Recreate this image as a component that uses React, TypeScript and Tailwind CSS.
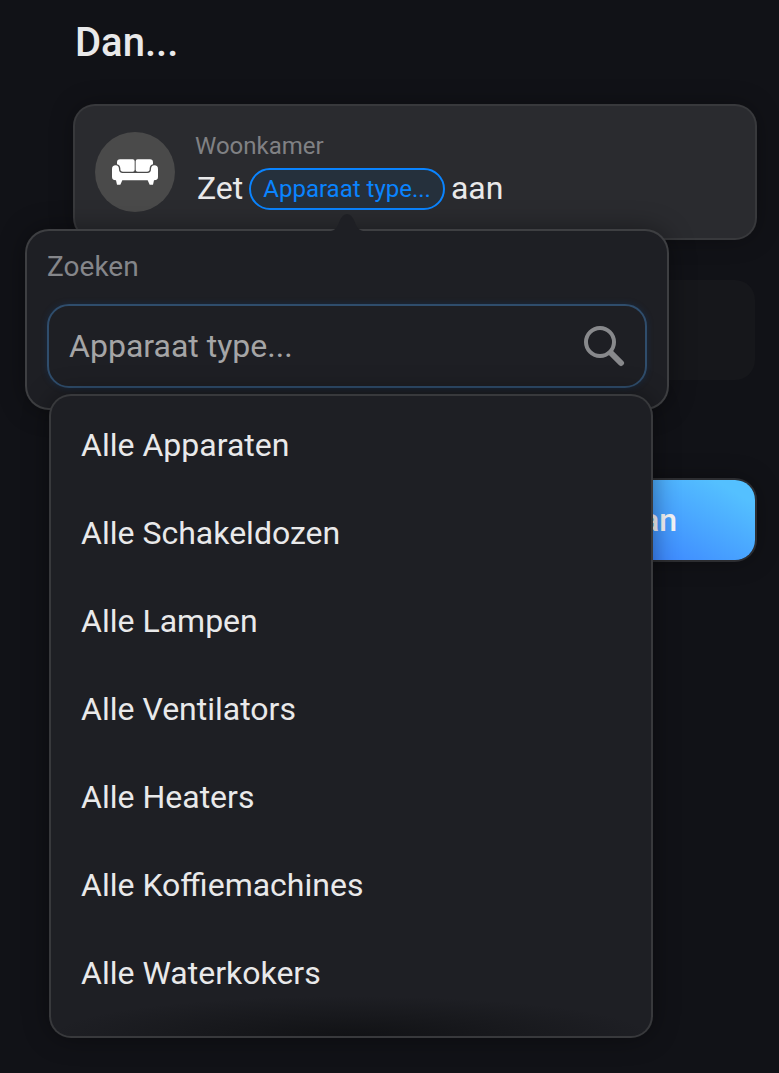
import { useState } from "react";

const deviceTypes = [
  "Alle Apparaten",
  "Alle Schakeldozen",
  "Alle Lampen",
  "Alle Ventilators",
  "Alle Heaters",
  "Alle Koffiemachines",
  "Alle Waterkokers",
];

function SofaIcon() {
  return (
    <svg viewBox="0 0 138 76" className="h-[26px] w-[46px] fill-white" aria-hidden="true">
      <path d="M15 9Q15 0 24 0H62Q68 0 68 6V31Q68 37 62 37H33Q25 37 25 29V27Q24 17 15 15Z" />
      <path d="M123 9Q123 0 114 0H77Q71 0 71 6V31Q71 37 77 37H105Q113 37 113 29V27Q114 17 123 15Z" />
      <path d="M0 29Q0 18 11 18Q21 19 21 29Q21 41 32 41H106Q117 41 117 29Q117 19 127 18Q138 18 138 29V53Q138 63 126 63L123 76H113L107 63H31L25 76H15L12 63Q0 63 0 53Z" />
    </svg>
  );
}

function SearchIcon() {
  return (
    <svg viewBox="0 0 42 42" className="size-[42px] shrink-0" fill="none" stroke="#88898c" aria-hidden="true">
      <circle cx="17" cy="17" r="14" strokeWidth="4" />
      <path d="M28 28L38 38" strokeWidth="6" strokeLinecap="round" />
    </svg>
  );
}

function DeviceTypePopover() {
  const [query, setQuery] = useState("");
  const options = deviceTypes.filter((d) => d.toLowerCase().includes(query.toLowerCase()));

  return (
    <div className="absolute top-full left-1/2 z-10 mt-[21px] w-[640px] -translate-x-1/2 rounded-[22px] bg-[#1e1f24] p-5 shadow-[0_0_0_2px_#3e3f42,0_0_28px_rgba(0,0,0,0.45)]">
      <svg viewBox="0 0 32 20" className="absolute bottom-full left-1/2 -mb-px h-5 w-8 -translate-x-1/2 fill-[#1e1f24]" aria-hidden="true">
        <path d="M0 20V19Q5 18 7 13L9 8Q12 2 16 2Q20 2 23 8L25 13Q27 18 32 19V20Z" />
      </svg>
      <label htmlFor="device-search" className="mb-[21px] block text-[28px] leading-8 text-[#85868a]">
        Zoeken
      </label>
      <div className="relative">
        <div className="flex h-[84px] items-center rounded-[22px] border-2 border-[#2f4d6c] px-5 shadow-[0_0_6px_rgba(20,60,110,0.4)]">
          <input
            id="device-search"
            type="text"
            value={query}
            onChange={(e) => setQuery(e.target.value)}
            placeholder="Apparaat type..."
            className="h-full min-w-0 flex-1 bg-transparent text-[32px] leading-10 text-[#e9e9ea] outline-none placeholder:text-[#a5a5a6]"
          />
          <SearchIcon />
        </div>
        <ul className="absolute top-full left-1 mt-2 h-[640px] w-full overflow-hidden rounded-[20px] bg-[#1e1f24] pt-[5px] shadow-[0_0_0_2px_#38393c,0_0_28px_rgba(0,0,0,0.45)]">
          {options.map((name) => (
            <li key={name}>
              <button type="button" className="flex h-[88px] w-full items-center px-[30px] text-left text-[32px] leading-10 text-[#e9e9ea]">
                {name}
              </button>
            </li>
          ))}
          <li aria-hidden="true" className="pointer-events-none absolute inset-x-0 bottom-0 h-10 bg-[radial-gradient(ellipse_50%_100%_at_50%_100%,#111215,transparent)]" />
        </ul>
      </div>
    </div>
  );
}

export default function App() {
  return (
    <main className="min-h-screen bg-[#111217] pt-4 pr-6 pl-[75px] font-['Roboto',sans-serif] text-[#e9e9ea]">
      <h1 className="text-[40px] leading-[54px] font-medium">Dan...</h1>

      <section className="mt-9 flex h-[132px] items-center gap-5 rounded-[20px] bg-[#2a2b2f] px-5 shadow-[0_0_0_2px_#38393c,0_0_24px_rgba(0,0,0,0.35)]">
        <div className="flex size-20 shrink-0 items-center justify-center rounded-full bg-[#4a4a4a]">
          <SofaIcon />
        </div>
        <div className="pb-1">
          <p className="mb-1.5 text-[24px] leading-8 text-[#808184]">Woonkamer</p>
          <div className="flex items-start gap-1.5 pl-0.5 text-[32px] leading-10">
            <span>Zet</span>
            <div className="relative">
              <button type="button" className="flex h-[42px] items-center rounded-full border-2 border-[#0a84ff] bg-[#25303c] px-3 text-[24px] text-[#0a84ff]">
                Apparaat type...
              </button>
              <DeviceTypePopover />
            </div>
            <span>aan</span>
          </div>
        </div>
      </section>

      <div className="mt-[42px] h-[100px] rounded-[20px] bg-[#16171b]" />

      <div className="mt-[100px] flex justify-end">
        <button
          type="button"
          className="h-20 rounded-[20px] bg-linear-[30deg] from-[#3a80ff] from-35% to-[#54c0ff] to-90% px-[78px] text-[32px] leading-10 font-medium text-[#f4f4f6] shadow-[0_0_0_2px_#2c2d31,0_0_24px_rgba(0,0,0,0.35)]"
        >
          Opslaan
        </button>
      </div>
    </main>
  );
}
